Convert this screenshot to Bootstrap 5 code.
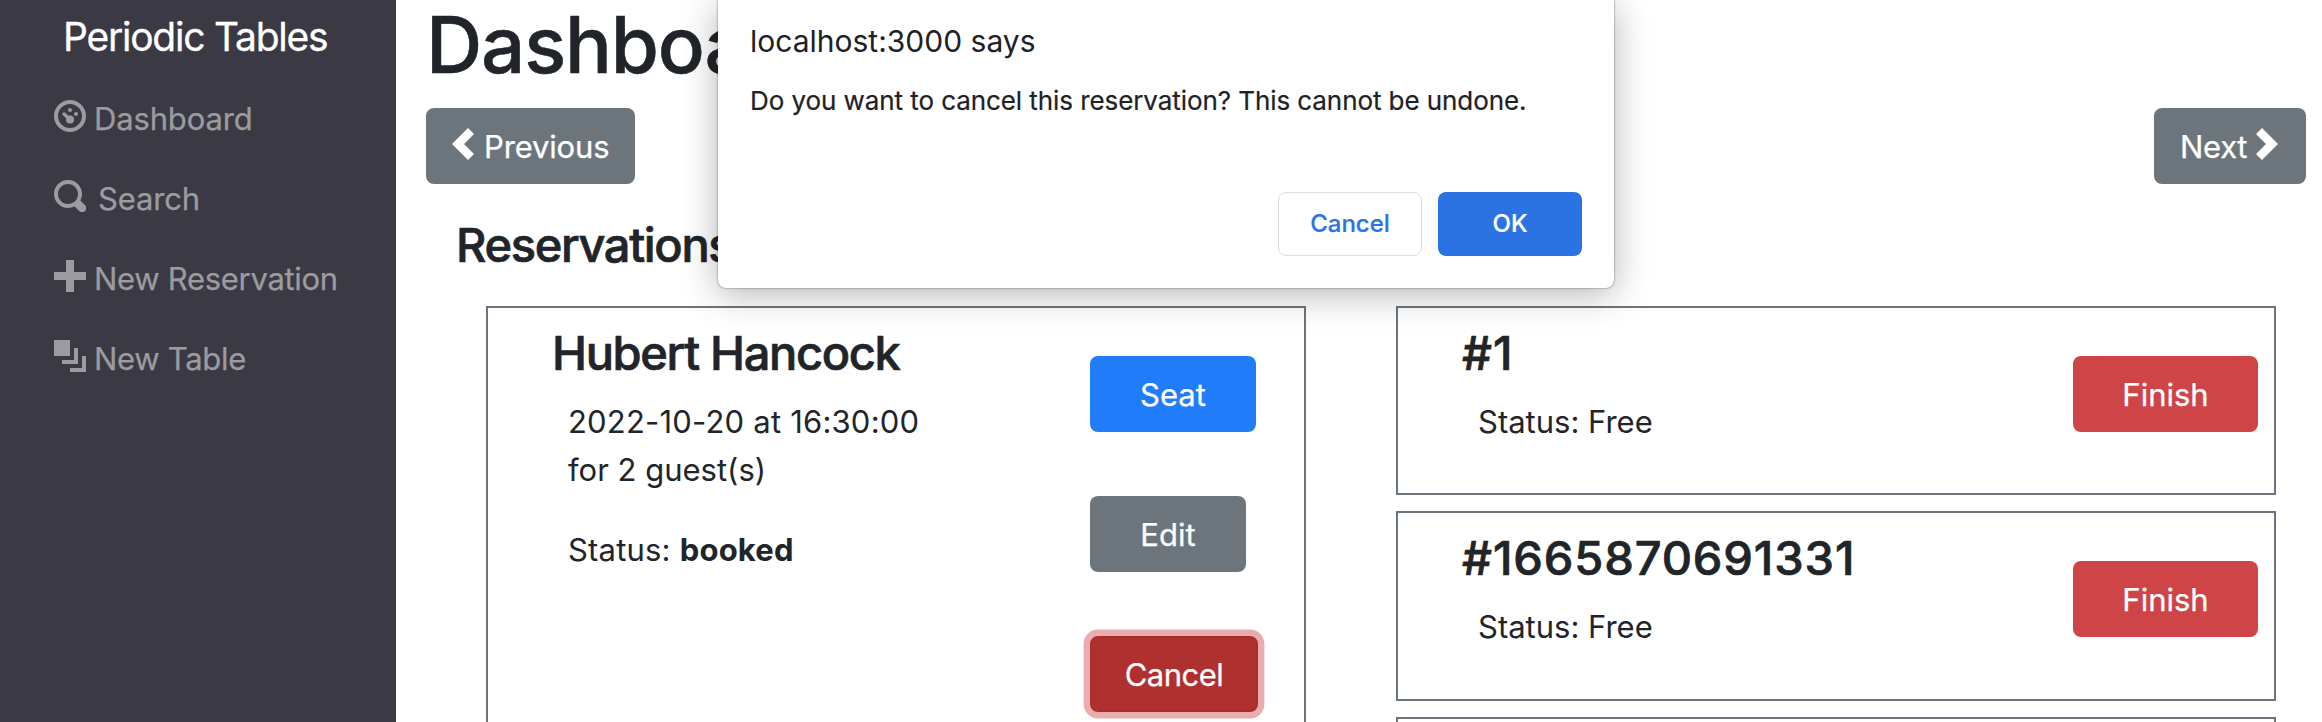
<!DOCTYPE html>
<html lang="en">
<head>
<meta charset="utf-8">
<meta name="viewport" content="width=device-width, initial-scale=1">
<title>Periodic Tables</title>
<link href="https://cdn.jsdelivr.net/npm/bootstrap@5.3.0/dist/css/bootstrap.min.css" rel="stylesheet">
<style>
  body { font-family: Inter, "Liberation Sans", sans-serif; font-size: 31px; line-height: 48px; color: #212529; background: #fff; height: 722px; overflow: hidden; }
  .oi { width: 32px; height: 32px; flex: none; fill: currentColor; margin-top: 6px; }

  .app { height: 722px; }
  .side { width: 396px; flex: none; background: #3b3a44; padding: 13px 0 0 54px; }
  .brand { font-size: 39px; color: #fff; padding-left: 9px; margin-bottom: 33px; letter-spacing: -1.24px; -webkit-text-stroke: .3px; }
  .side .nav-link { padding: 0; height: 48px; margin-bottom: 32px; gap: 8px; color: #9b9ba0; letter-spacing: -.15px; -webkit-text-stroke: .25px; }
  .side .nav-link span { padding-top: 1px; }
  .side .nav-link.wide-gap { gap: 12px; }

  main { padding: 0 16px 0 30px; }
  h1 { font-size: 78px; line-height: 96px; font-weight: 500; margin: -3px 0 15px; letter-spacing: -1.2px; -webkit-text-stroke: .5px; }
  h2, h3 { font-size: 47px; line-height: 58px; font-weight: 500; letter-spacing: -1.35px; margin: 0; -webkit-text-stroke: .7px; }
  h2 { padding: 32px 0; height: 122px; }
  .digits { letter-spacing: .88px; }
  .snug { letter-spacing: -.3px; }
  .airy { letter-spacing: .2px; }

  .btn.act { font-size: 31px; line-height: 48px; height: 76px; padding: 13px 24px 11px; border: 2px solid transparent; border-radius: 8px; color: #fff; white-space: nowrap; -webkit-text-stroke: .25px; }
  .btn.grey { background: #6d757c; }
  .btn.page { width: 209px; letter-spacing: -.15px; }
  .btn.page.short { width: 152px; }
  .btn.page .oi { margin-top: 5px; }
  .btn.blue { background: #207cf8; width: 166px; }
  .btn.edit { width: 156px; }
  .btn.red { background: #cf4547; width: 185px; }
  .btn.drop { width: 168px; background: #b03030; border-color: #a72e30; box-shadow: 0 0 0 6.4px #ebacb0; letter-spacing: -.5px; }
  .btn .prev { margin-left: -4px; margin-right: 4px; }
  .btn .next { margin-right: -4px; margin-left: 5px; }

  .col-res { width: 940px; flex: none; padding-left: 30px; }
  .col-tab { width: 940px; flex: none; padding-top: 122px; }
  .panel { border: 2px solid #6c757d; }
  .res { width: 820px; height: 416px; border-bottom: 0; margin-left: 30px; padding: 16px 0 0 64px; }
  .res .info { width: 538px; flex: none; }
  .info p { margin: 16px 0 32px 16px; }
  .res .acts { gap: 64px; padding-top: 32px; }
  .seat-table { width: 880px; height: 189.4px; margin: 0 0 16px 30px; padding: 16px 16px 0 64px; }
  .seat-table .act { margin-top: 32px; }
  .seat-table.cut { height: 5px; border-bottom: 0; padding: 0; margin-bottom: 0; }

  .dialog-box { left: 718px; top: 0; width: 896px; height: 288px; background: #fff; color: #202124; border-radius: 0 0 8px 8px; padding: 23px 32px 32px 32px; line-height: 36px; box-shadow: 0 0 2px rgba(0,0,0,.6), 0 6px 36px rgba(0,0,0,.3); }
  .dialog-title { font-size: 30px; margin-bottom: 24px; }
  .dialog-msg { font-size: 26px; letter-spacing: -.075px; white-space: nowrap; -webkit-text-stroke: .2px; }
  .dialog-box .btn { width: 144px; height: 64px; font-size: 24px; font-weight: 500; border-radius: 8px; padding: 0; -webkit-text-stroke: .2px; }
  .btn.no { color: #2b73e2; border: 1px solid #dadce0; background: #fff; }
  .btn.yes { color: #fff; background: #2b73e2; border: 0; }
</style>
</head>
<body>
<div class="app d-flex overflow-hidden">
  <nav class="side">
    <div class="brand">Periodic Tables</div>
    <div class="nav flex-column flex-nowrap">
      <a class="nav-link d-flex" href="#">
        <svg class="oi" viewBox="0 0 8 8"><path d="M4 0a4 4 0 1 0 0 8 4 4 0 0 0 0-8zm0 1a3 3 0 1 1 0 6 3 3 0 0 1 0-6z"/><circle cx="4" cy="2.5" r=".5"/><circle cx="5.5" cy="3.5" r=".5"/><circle cx="4" cy="4.85" r="1"/><path d="M2.5 3.5l1.3 1.2" stroke="currentColor" stroke-width=".85" stroke-linecap="round"/></svg>
        <span>Dashboard</span></a>
      <a class="nav-link wide-gap d-flex" href="#">
        <svg class="oi" viewBox="0 0 8 8"><path d="M3.5 0c-1.93 0-3.5 1.57-3.5 3.5s1.57 3.5 3.5 3.5c.59 0 1.17-.14 1.66-.41a1 1 0 0 0 .13.13l1 1a1.02 1.02 0 1 0 1.44-1.44l-1-1a1 1 0 0 0-.16-.13c.27-.49.44-1.06.44-1.66 0-1.93-1.55-3.5-3.5-3.5zm0 1c1.39 0 2.5 1.11 2.5 2.5 0 .66-.24 1.27-.66 1.72-.01.01-.02.02-.03.03a1 1 0 0 0-.13.13c-.44.4-1.04.63-1.69.63-1.39 0-2.5-1.11-2.5-2.5s1.11-2.5 2.5-2.5z"/></svg>
        <span>Search</span></a>
      <a class="nav-link d-flex" href="#">
        <svg class="oi" viewBox="0 0 8 8"><path d="M3 0v3h-3v2h3v3h2v-3h3v-2h-3v-3h-2z"/></svg>
        <span class="snug text-nowrap">New Reservation</span></a>
      <a class="nav-link d-flex" href="#">
        <svg class="oi" viewBox="0 0 8 8"><path d="M0 0v4h4v-4h-4zm5 2v3h-3v1h4v-4h-1zm2 2v3h-3v1h4v-4h-1z"/></svg>
        <span class="snug">New Table</span></a>
    </div>
  </nav>

  <main class="flex-grow-1">
    <h1>Dashboard</h1>
    <div class="d-flex justify-content-between">
      <button class="btn act grey page d-flex"><svg class="oi prev" viewBox="0 0 8 8"><path d="M5 0l-4 4 4 4 1.5-1.5-2.5-2.5 2.5-2.5-1.5-1.5z"/></svg>Previous</button>
      <button class="btn act grey page short d-flex"><span class="snug">Next</span><svg class="oi next" viewBox="0 0 8 8"><path d="M2.5 0l-1.5 1.5 2.5 2.5-2.5 2.5 1.5 1.5 4-4-4-4z"/></svg></button>
    </div>
    <div class="d-flex">
      <section class="col-res">
        <h2>Reservations</h2>
        <article class="panel res d-flex">
          <div class="info">
            <h3>Hubert Hancock</h3>
            <p><span class="airy">2022-10-20 at 16:30:00</span><br>for 2 guest(s)</p>
            <p class="airy">Status: <strong>booked</strong></p>
          </div>
          <div class="acts d-flex flex-column">
            <button class="btn act blue">Seat</button>
            <button class="btn act grey edit">Edit</button>
            <button class="btn act drop">Cancel</button>
          </div>
        </article>
      </section>
      <section class="col-tab">
        <article class="panel seat-table d-flex justify-content-between align-items-start">
          <div class="info"><h3 class="digits">#1</h3><p>Status: Free</p></div>
          <button class="btn act red">Finish</button>
        </article>
        <article class="panel seat-table d-flex justify-content-between align-items-start">
          <div class="info"><h3 class="digits">#1665870691331</h3><p>Status: Free</p></div>
          <button class="btn act red">Finish</button>
        </article>
        <article class="panel seat-table cut"></article>
      </section>
    </div>
  </main>
</div>

<div class="dialog-box position-absolute d-flex flex-column" role="dialog">
  <div class="dialog-title">localhost:3000 says</div>
  <div class="dialog-msg">Do you want to cancel this reservation? This cannot be undone.</div>
  <div class="d-flex justify-content-end gap-3 mt-auto">
    <button class="btn no">Cancel</button>
    <button class="btn yes">OK</button>
  </div>
</div>
<script src="https://cdn.jsdelivr.net/npm/bootstrap@5.3.0/dist/js/bootstrap.bundle.min.js"></script>
</body>
</html>
